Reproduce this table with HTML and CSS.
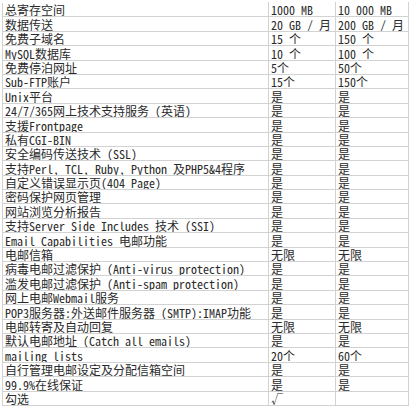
FILE: index.html
```html
<!DOCTYPE html>
<html lang="zh-CN">
<head>
<meta charset="utf-8">
<title>主机方案比较</title>
<link rel="stylesheet" href="styles.css">
</head>
<body>
<table class="plans">
<colgroup><col class="c-name"><col class="c-a"><col class="c-b"></colgroup>
<tbody>
<tr><td>总寄存空间</td><td>1000 MB</td><td>10 000 MB</td></tr>
<tr><td>数据传送</td><td>20 GB / 月</td><td>200 GB / 月</td></tr>
<tr><td>免费子域名</td><td>15 个</td><td>150 个</td></tr>
<tr><td>MySQL数据库</td><td>10 个</td><td>100 个</td></tr>
<tr><td>免费停泊网址</td><td>5个</td><td>50个</td></tr>
<tr><td>Sub-FTP账户</td><td>15个</td><td>150个</td></tr>
<tr><td>Unix平台</td><td>是</td><td>是</td></tr>
<tr><td>24/7/365网上技术支持服务 (英语)</td><td>是</td><td>是</td></tr>
<tr><td>支援Frontpage</td><td>是</td><td>是</td></tr>
<tr><td>私有CGI-BIN</td><td>是</td><td>是</td></tr>
<tr><td>安全编码传送技术 (SSL)</td><td>是</td><td>是</td></tr>
<tr><td>支持Perl, TCL, Ruby, Python 及PHP5&amp;4程序</td><td>是</td><td>是</td></tr>
<tr><td>自定义错误显示页(404 Page)</td><td>是</td><td>是</td></tr>
<tr><td>密码保护网页管理</td><td>是</td><td>是</td></tr>
<tr><td>网站浏览分析报告</td><td>是</td><td>是</td></tr>
<tr><td>支持Server Side Includes 技术 (SSI)</td><td>是</td><td>是</td></tr>
<tr><td>Email Capabilities 电邮功能</td><td>是</td><td>是</td></tr>
<tr><td>电邮信箱</td><td>无限</td><td>无限</td></tr>
<tr><td>病毒电邮过滤保护 (Anti-virus protection)</td><td>是</td><td>是</td></tr>
<tr><td>滥发电邮过滤保护 (Anti-spam protection)</td><td>是</td><td>是</td></tr>
<tr><td>网上电邮Webmail服务</td><td>是</td><td>是</td></tr>
<tr><td>POP3服务器:外送邮件服务器 (SMTP):IMAP功能</td><td>是</td><td>是</td></tr>
<tr><td>电邮转寄及自动回复</td><td>无限</td><td>无限</td></tr>
<tr><td>默认电邮地址 (Catch all emails)</td><td>是</td><td>是</td></tr>
<tr><td>mailing lists</td><td>20个</td><td>60个</td></tr>
<tr><td>自行管理电邮设定及分配信箱空间</td><td>是</td><td>是</td></tr>
<tr><td>99.9%在线保证</td><td>是</td><td>是</td></tr>
<tr><td>勾选</td><td>√</td><td></td></tr>
</tbody>
</table>
</body>
</html>
```
FILE: styles.css
```css
html, body {
  margin: 0;
  padding: 0;
  background: #ffffff;
}
body {
  padding: 2px 0 0 2px;
}
.plans {
  border-collapse: collapse;
  table-layout: fixed;
  width: 406px;
  font-family: "Noto Sans Mono CJK SC", "Noto Sans CJK SC", "Liberation Mono", monospace;
  font-size: 12px;
  color: #2a2a2a;
}
.c-name { width: 266px; }
.c-a { width: 67px; }
.c-b { width: 73px; }
.plans td {
  border: 1px solid #d2d2d2;
  height: 13.4px;
  line-height: 13px;
  padding: 0 0 0 2px;
  white-space: nowrap;
  overflow: hidden;
  vertical-align: bottom;
}
.plans tr:first-child td {
  border-top-color: #ffffff;
}
```
